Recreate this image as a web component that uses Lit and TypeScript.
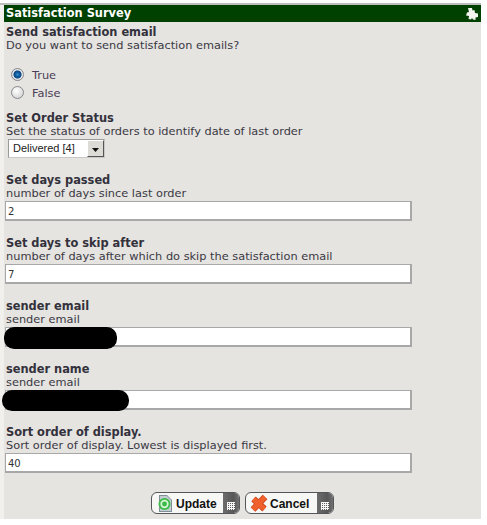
import { LitElement, html, css } from "lit";
import { customElement } from "lit/decorators.js";

const grid = html`<svg class="grid" width="8" height="8" viewBox="0 0 8 8"><path d="M0 .5h8M0 2.500h8M0 4.500h8M0 6.500h8M.5 0v8M2.500 0v8M4.500 0v8M6.500 0v8" stroke="#f6f6f6" stroke-width="1" fill="none"/></svg>`;

@customElement("app-root")
export class AppRoot extends LitElement {
  static styles = css`
    :host { display: block; width: 487px; height: 525px; background: #fff; font-family: "DejaVu Sans", Verdana, sans-serif; font-size: 11.35px; color: #35333f; overflow: hidden; }
    .page { padding-top: 3px; display: flex; flex-direction: column; width: 481px; position: relative; }
    .rule { height: 2px; background: #bdbdbd; }
    .panel { margin-left: 4px; width: 477px; height: 514px; background: #e5e4e0; display: flex; flex-direction: column; position: relative; }
    .strip { position: absolute; left: 0; top: 5px; width: 4px; height: 514px; background: #f1f0ed; }
    .head { height: 17px; background: #004000; color: #fff; font-weight: 700; font-size: 11.4px; line-height: 17px; padding: 0 3px 0 2px; display: flex; justify-content: space-between; align-items: center; }
    .body { padding: 4px 0 0 2px; display: flex; flex-direction: column; }
    .t { font-weight: 700; line-height: 13px; font-size: 11.4px; color: #33313c; }
    .d { line-height: 13px; font-size: 11.35px; color: #3a3844; }
    .radios { margin-top: 15px; display: flex; flex-direction: column; gap: 4px; padding-left: 5px; height: 32px; }
    .radio { display: flex; align-items: center; gap: 8px; height: 14px; color: #4a3d55; line-height: 14px; }
    .radio span { padding-top: 2px; }
    .radio input { appearance: none; margin: 0; width: 13px; height: 13px; border-radius: 50%; border: 1px solid #85888e; background: radial-gradient(circle at 40% 35%, #fff, #d2d2d2 85%); box-sizing: border-box; }
    .radio input:checked { background: radial-gradient(circle at 50% 50%, #2f8fd0 0, #0b4f90 34%, #0d4a86 46%, #e8e8e8 58%, #cfcfcf 95%); }
    .sec1 { margin-top: 13px; }
    .select { margin: 1px 0 0 2px; width: 97px; height: 19px; box-sizing: border-box; background: #fff; border: 1px solid; border-color: #9a9a9a #c8c8c8 #c8c8c8 #9a9a9a; display: flex; justify-content: space-between; font-family: "Liberation Sans", Arial, sans-serif; font-size: 11px; line-height: 17px; color: #222; padding-left: 4px; }
    .arrow { width: 17px; background: #dcdbd6; border: 1px solid; border-color: #fff #555 #555 #fff; box-sizing: border-box; display: flex; align-items: center; justify-content: center; }
    .arrow svg { display: block; margin-top: 3px; }
    .field { margin-top: 16px; position: relative; }
    .field input { display: block; margin: 1px 0 0 -1px; width: 407px; height: 20px; box-sizing: border-box; border: 1px solid; border-color: #a8a8a8; border-width: 1px 2px 2px 1px; background: #fff; font: 10px "DejaVu Sans", Verdana, sans-serif; color: #333; padding: 2px 2px 0; outline: none; }
    .blob { position: absolute; background: #000; border-radius: 10px; }
    .blob.a { left: -2px; top: 27px; width: 113px; height: 22px; }
    .blob.b { left: -4px; top: 27px; width: 127px; height: 21px; }
    .buttons { display: flex; justify-content: center; gap: 5px; margin: 19px 0 0 -2px; }
    .btn { width: 89px; height: 22px; box-sizing: border-box; border: 1px solid #55565a; border-radius: 6px; background: #f7f7f6; display: flex; padding: 0; overflow: hidden; font: 700 12px "Liberation Sans", Arial, sans-serif; color: #111; }
    .lab { flex: 1; display: flex; align-items: center; gap: 2px; padding-left: 4px; line-height: 20px; }
    .lab svg { display: block; }
    .lab span { padding-top: 1px; }
    .side { width: 16px; background: linear-gradient(90deg,#6c6c6c,#575757 65%,#707070); display: flex; align-items: flex-end; justify-content: center; padding-bottom: 3px; box-sizing: border-box; }
    .grid { display: block; }
  `;
  render() {
    return html`
      <div class="page">
        <div class="rule"></div>
        <div class="strip"></div>
        <div class="panel">
          <div class="head"><span>Satisfaction Survey</span>
            <svg width="12" height="12" viewBox="0 0 12 12"><path d="M2 0h4l.5 2.500L8.500 2 9 5l3 .5V9L9.500 9.500 9.500 12 7 11.500 6 10 5 11.500 2.500 11 3 8 0 7.500l1-3L3 4z" fill="#f4f4f0"/></svg>
          </div>
          <div class="body">
            <div class="t">Send satisfaction email</div>
            <div class="d">Do you want to send satisfaction emails?</div>
            <div class="radios">
              <label class="radio"><input type="radio" name="r" checked /><span>True</span></label>
              <label class="radio"><input type="radio" name="r" /><span>False</span></label>
            </div>
            <div class="sec1">
              <div class="t">Set Order Status</div>
              <div class="d">Set the status of orders to identify date of last order</div>
              <div class="select"><span>Delivered [4]</span><span class="arrow"><svg width="7" height="4" viewBox="0 0 7 4"><path d="M0 0h7L3.500 4z" fill="#111"/></svg></span></div>
            </div>
            <div class="field"><div class="t">Set days passed</div><div class="d">number of days since last order</div><input value="2" /></div>
            <div class="field"><div class="t">Set days to skip after</div><div class="d">number of days after which do skip the satisfaction email</div><input value="7" /></div>
            <div class="field"><div class="t">sender email</div><div class="d">sender email</div><input /><div class="blob a"></div></div>
            <div class="field"><div class="t">sender name</div><div class="d">sender email</div><input /><div class="blob b"></div></div>
            <div class="field"><div class="t">Sort order of display.</div><div class="d">Sort order of display. Lowest is displayed first.</div><input value="40" /></div>
            <div class="buttons">
              <button class="btn"><span class="lab">
                <svg width="18" height="19" viewBox="0 0 18 19"><path d="M3 1h8l5 5v12H3z" fill="#7f8f96"/><path d="M4 2h7l4 4v11H4z" fill="#c4ced2"/><circle cx="8.500" cy="10" r="6" fill="#3cbb48"/><circle cx="8.500" cy="10" r="3.300" fill="none" stroke="#d8f5d8" stroke-width="1.700"/></svg>
                <span>Update</span></span><span class="side">${grid}</span></button>
              <button class="btn"><span class="lab">
                <svg width="18" height="19" viewBox="0 0 18 19"><path d="M3.500 5L14.500 15M15 3L3 15.500" stroke="#c9431a" stroke-width="6.500" fill="none"/><path d="M3.500 5L14.500 15M15 3L3 15.500" stroke="#f0602c" stroke-width="5" fill="none"/></svg>
                <span>Cancel</span></span><span class="side">${grid}</span></button>
            </div>
          </div>
        </div>
      </div>
    `;
  }
}
